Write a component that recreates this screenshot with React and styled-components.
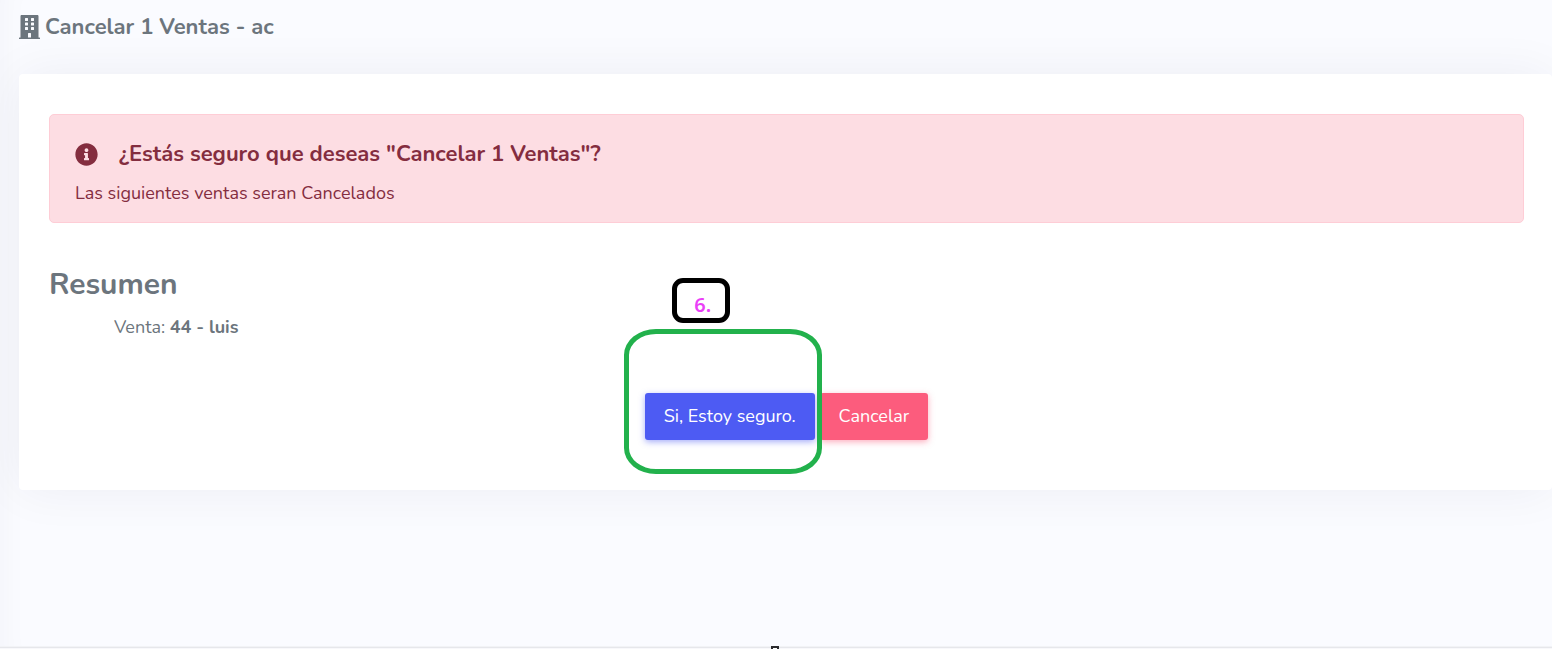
import React from "react";
import styled, { createGlobalStyle } from "styled-components";
import { FaBuilding, FaInfoCircle } from "react-icons/fa";

const GlobalStyle = createGlobalStyle`
  *, *::before, *::after { box-sizing: border-box; }
  body {
    margin: 0;
    background: #fafbff;
    color: #6c757d;
    font-family: Nunito, Lato, "Open Sans", sans-serif;
    font-size: 18px;
    line-height: 28px;
  }
  h1, h2, h3, p, ul { margin: 0; padding: 0; }
`;

const Page = styled.div`
  display: flex;
  flex-direction: column;
  min-height: 100vh;
  overflow: hidden;
  box-shadow: inset 28px 0 32px -28px rgba(8, 21, 66, 0.04);
`;

const Header = styled.header`
  display: flex;
  align-items: center;
  gap: 5px;
  height: 74px;
  padding: 0 19px 20px;
`;

const PageTitle = styled.h1`
  font-size: 22px;
  line-height: 30px;
  font-weight: 700;
`;

const BuildingIcon = styled(FaBuilding)`
  width: 21px;
  height: 24px;
`;

const Card = styled.main`
  display: flex;
  flex-direction: column;
  margin-left: 19px;
  padding: 40px 28px 50px 30px;
  border-radius: 4px;
  background: #fff;
  box-shadow: 0 0 50px rgba(8, 21, 66, 0.06);
`;

const Alert = styled.section`
  padding: 24px 25px 15px;
  border: 1px solid #fecdd6;
  border-radius: 5px;
  background: #fddde3;
  color: #842d3f;
`;

const AlertHeading = styled.div`
  display: flex;
  align-items: center;
  gap: 21px;
  margin-bottom: 10px;
`;

const AlertTitle = styled.h2`
  font-size: 22px;
  line-height: 30px;
  font-weight: 700;
`;

const InfoIcon = styled(FaInfoCircle)`
  width: 23px;
  height: 23px;
`;

const SummaryTitle = styled.h3`
  margin-top: 42px;
  font-size: 30px;
  line-height: 40px;
  font-weight: 700;
`;

const SummaryList = styled.ul`
  margin-top: 8px;
  padding-left: 65px;
  list-style: none;
`;

const Actions = styled.div`
  display: flex;
  justify-content: center;
  gap: 5px;
  margin-top: 52px;
`;

const Highlighted = styled.div`
  position: relative;
`;

const Button = styled.button`
  height: 47px;
  padding: 0 19px 2px;
  border: 0;
  border-radius: 3px;
  background: ${({ $tone }) => ($tone === "danger" ? "#fc5c7d" : "#4d5bf3")};
  box-shadow: 0 2px 6px
    ${({ $tone }) => ($tone === "danger" ? "rgba(252, 92, 125, 0.5)" : "rgba(77, 91, 243, 0.5)")};
  color: #fff;
  font: inherit;
  cursor: pointer;
`;

const Outline = styled.span`
  position: absolute;
  z-index: 1;
  top: -64px;
  right: -7px;
  bottom: -34px;
  left: -21px;
  border: 5px solid #22b14c;
  border-radius: 32px / 26px;
  pointer-events: none;
`;

const StepBadge = styled.span`
  position: absolute;
  top: -115px;
  left: 27px;
  width: 58px;
  height: 45px;
  padding: 8px 0 0 4px;
  border: 5px solid #000;
  border-radius: 11px;
  color: #ea3ff7;
  font-family: "Noto Sans", sans-serif;
  font-size: 20px;
  line-height: 28px;
  font-weight: 600;
  text-align: center;
`;

const Footer = styled.footer`
  display: flex;
  justify-content: center;
  height: 3px;
  margin-top: auto;
  background: linear-gradient(#f2f3f6 0 1px, #e6e7eb 1px 2px, #f8f8fb 2px);
`;

const Handle = styled.span`
  width: 8px;
  height: 3px;
  margin-right: 2px;
  border: 2px solid #2b2b2e;
  border-bottom: 0;
  background: #fff;
`;

export default function App() {
  return (
    <>
      <GlobalStyle />
      <Page>
        <Header>
          <BuildingIcon aria-hidden="true" />
          <PageTitle>Cancelar 1 Ventas - ac</PageTitle>
        </Header>
        <Card>
          <Alert role="alert">
            <AlertHeading>
              <InfoIcon aria-hidden="true" />
              <AlertTitle>¿Estás seguro que deseas "Cancelar 1 Ventas"?</AlertTitle>
            </AlertHeading>
            <p>Las siguientes ventas seran Cancelados</p>
          </Alert>
          <SummaryTitle>Resumen</SummaryTitle>
          <SummaryList>
            <li>
              Venta: <strong>44 - luis</strong>
            </li>
          </SummaryList>
          <Actions>
            <Highlighted>
              <Button type="button">Si, Estoy seguro.</Button>
              <Outline />
              <StepBadge>6.</StepBadge>
            </Highlighted>
            <Button type="button" $tone="danger">Cancelar</Button>
          </Actions>
        </Card>
        <Footer>
          <Handle />
        </Footer>
      </Page>
    </>
  );
}
